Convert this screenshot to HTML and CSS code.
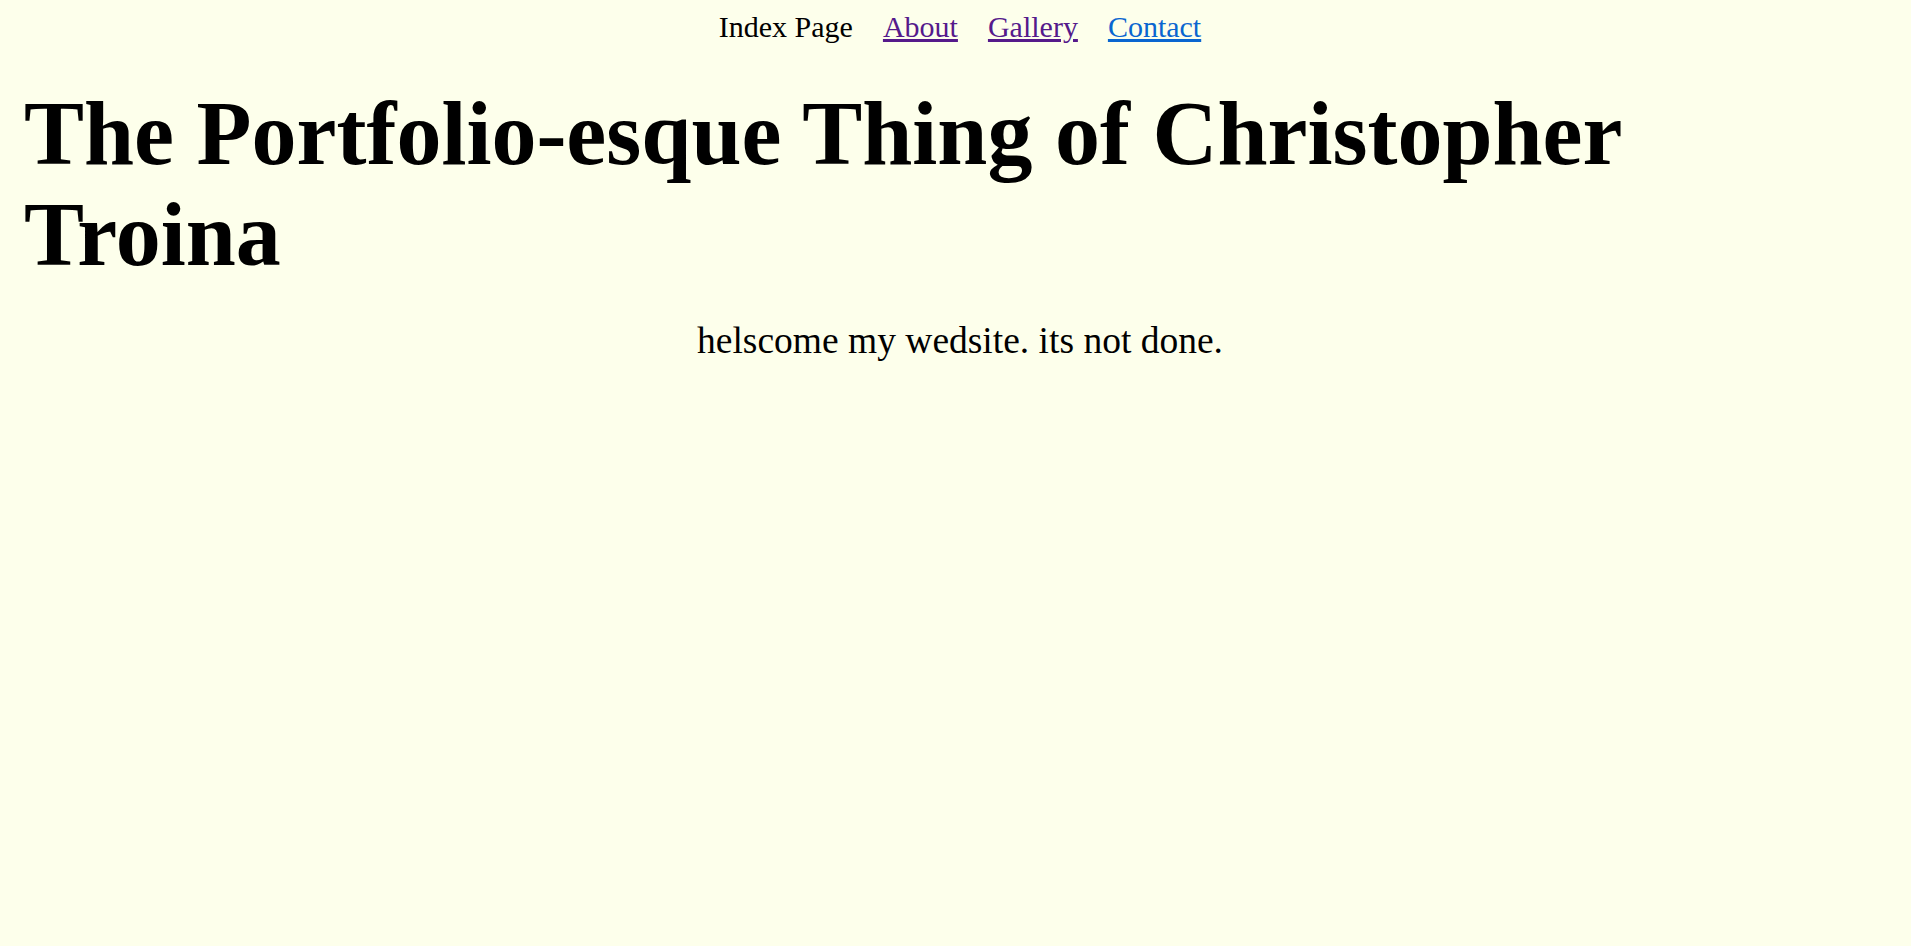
FILE: index.html
```html
<!DOCTYPE html>
<html lang="en">
<head>
<meta charset="utf-8">
<title>The Portfolio-esque Thing of Christopher Troina</title>
<link rel="stylesheet" href="styles.css">
</head>
<body>
<div class="page">
  <nav class="nav">
    <span class="nav-item current">Index Page</span>
    <a class="nav-item visited" href="#about">About</a>
    <a class="nav-item visited" href="#gallery">Gallery</a>
    <a class="nav-item link" href="#contact">Contact</a>
  </nav>
  <h1 class="title">The Portfolio-esque Thing of Christopher Troina</h1>
  <p class="intro">helscome my wedsite. its not done.</p>
</div>
</body>
</html>
```

FILE: styles.css
```css
html, body {
  margin: 0;
  padding: 0;
  background: #fdffeb;
}

body {
  font-family: "Liberation Serif", "Times New Roman", serif;
  color: #000;
}

.page {
  padding: 10px 15px 0 24px;
}

.nav {
  display: flex;
  justify-content: center;
  gap: 30px;
  font-size: 30px;
}

.nav-item {
  color: #000;
}

.visited {
  color: #551a8b;
  text-decoration: underline;
}

.link {
  color: #0a66d0;
  text-decoration: underline;
}

.title {
  margin: 39px 0 0;
  font-size: 90px;
  font-weight: bold;
  line-height: 101px;
}

.intro {
  margin: 34px 0 0;
  text-align: center;
  font-size: 37.5px;
}
```
